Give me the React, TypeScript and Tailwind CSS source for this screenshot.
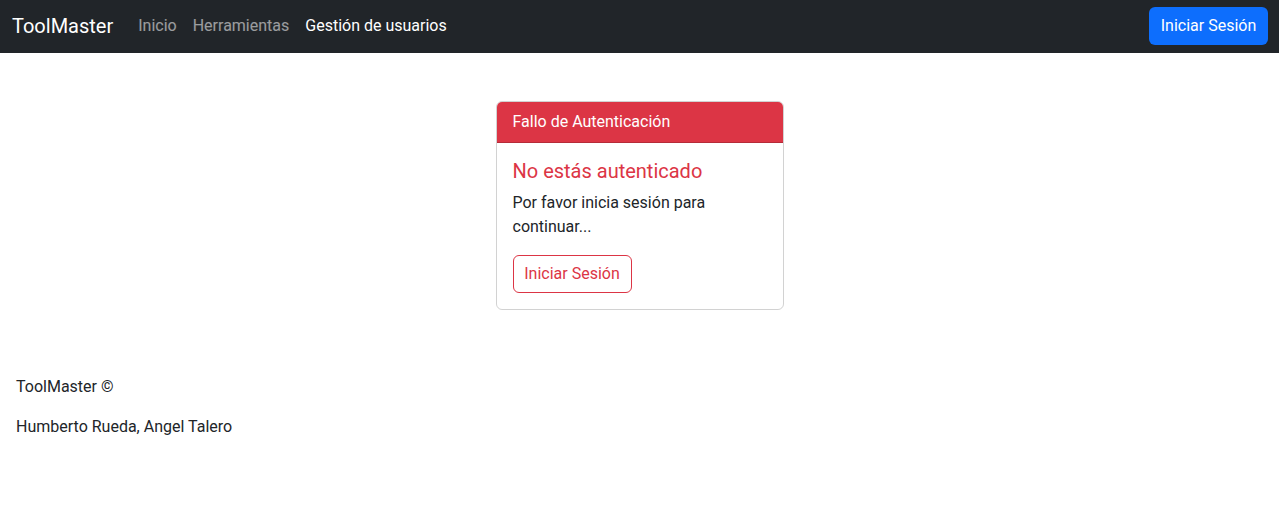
export default function App() {
  return (
    <div className="min-h-[531px] bg-white text-[#212529]" style={{ fontFamily: 'Roboto, "Noto Sans", sans-serif' }}>
      <nav className="h-[53px] bg-[#212529] flex items-center pl-3 pr-[11px] pb-[2px]">
        <span className="text-white text-[20px] leading-[30px] mr-[25px]">ToolMaster</span>
        <div className="flex items-center gap-4 text-[16px] leading-6">
          <span className="text-white/55">Inicio</span>
          <span className="text-white/55">Herramientas</span>
          <span className="text-white">Gestión de usuarios</span>
        </div>
        <button className="ml-auto h-[38px] w-[119px] rounded-md bg-[#0d6efd] text-white text-[16px] leading-6">Iniciar Sesión</button>
      </nav>
      <div className="flex justify-center pt-12">
        <div className="w-[288px] border border-black/[0.175] rounded-md overflow-hidden">
          <div className="bg-[#dc3545] text-white px-4 h-[41px] flex items-center text-[16px] border-b border-black/[0.175]">Fallo de Autenticación</div>
          <div className="p-4">
            <h5 className="text-[#dc3545] text-[20px] leading-6 mb-2">No estás autenticado</h5>
            <p className="text-[16px] leading-6 mb-4">Por favor inicia sesión para continuar...</p>
            <button className="border border-[#dc3545] text-[#dc3545] rounded-md w-[119px] h-[38px] text-[16px] leading-6">Iniciar Sesión</button>
          </div>
        </div>
      </div>
      <footer className="px-4 pt-[65px]">
        <p className="text-[16px] leading-6 mb-4">ToolMaster ©</p>
        <p className="text-[16px] leading-6">Humberto Rueda, Angel Talero</p>
      </footer>
    </div>
  );
}
